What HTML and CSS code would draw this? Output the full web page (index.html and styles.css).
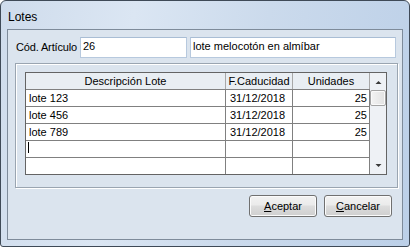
FILE: index.html
```html
<!DOCTYPE html>
<html lang="es">
<head>
<meta charset="utf-8">
<title>Lotes</title>
<link rel="stylesheet" href="styles.css">
</head>
<body>
<div class="window">
  <div class="titlebar"><span class="title">Lotes</span></div>
  <div class="client">
    <div class="field-row">
      <label class="lbl">Cód. Artículo</label>
      <div class="input code">26</div>
      <div class="input desc">lote melocotón en almíbar</div>
    </div>
    <div class="panel">
      <div class="grid">
        <div class="table">
          <div class="row head">
            <div class="cell">Descripción Lote</div>
            <div class="cell">F.Caducidad</div>
            <div class="cell">Unidades</div>
          </div>
          <div class="row">
            <div class="cell">lote 123</div>
            <div class="cell date">31/12/2018</div>
            <div class="cell num">25</div>
          </div>
          <div class="row">
            <div class="cell">lote 456</div>
            <div class="cell date">31/12/2018</div>
            <div class="cell num">25</div>
          </div>
          <div class="row">
            <div class="cell">lote 789</div>
            <div class="cell date">31/12/2018</div>
            <div class="cell num">25</div>
          </div>
          <div class="row">
            <div class="cell"><span class="caret"></span></div>
            <div class="cell date"></div>
            <div class="cell num"></div>
          </div>
          <div class="row">
            <div class="cell"></div>
            <div class="cell date"></div>
            <div class="cell num"></div>
          </div>
        </div>
        <div class="scrollbar">
          <div class="sb-btn"><svg width="7" height="4" viewBox="0 0 7 4"><polygon points="0.5,4 3.5,1 6.5,4" fill="#3a3a3a"/></svg></div>
          <div class="sb-thumb"></div>
          <div class="sb-track"></div>
          <div class="sb-btn"><svg width="7" height="4" viewBox="0 0 7 4"><polygon points="0.5,0 3.5,3 6.5,0" fill="#3a3a3a"/></svg></div>
        </div>
      </div>
    </div>
    <div class="buttons">
      <button class="btn"><u>A</u>ceptar</button>
      <button class="btn"><u>C</u>ancelar</button>
    </div>
  </div>
</div>
</body>
</html>
```
FILE: styles.css
```css
html, body {
  margin: 0;
  padding: 0;
  background: #ffffff;
}

body {
  font-family: "Liberation Sans", Arial, sans-serif;
  font-size: 11px;
  color: #000;
}

.window {
  width: 410px;
  height: 247px;
  box-sizing: border-box;
  border: 1px solid #3f4a57;
  border-radius: 6px 6px 3px 3px;
  background: linear-gradient(100deg, #cfdcec 0%, #dbe6f3 30%, #cbdaec 60%, #bcd0e8 100%);
  padding: 0 6px 6px 6px;
  display: flex;
  flex-direction: column;
}

.titlebar {
  height: 28px;
  box-sizing: border-box;
  padding: 9px 0 0 1px;
  font-size: 12px;
  line-height: 14px;
}

.client {
  flex: none;
  width: 396px;
  height: 211px;
  box-sizing: border-box;
  border: 1px solid #7e8b9a;
  background: #dbe4ee;
  padding: 7px 0 0 7px;
  display: flex;
  flex-direction: column;
}

.field-row {
  display: flex;
  height: 21px;
}

.lbl {
  width: 64px;
  margin-left: 1px;
  padding-top: 4px;
  box-sizing: border-box;
  line-height: 13px;
  letter-spacing: -0.15px;
  white-space: nowrap;
}

.input {
  box-sizing: border-box;
  height: 21px;
  background: #fff;
  border: 1px solid #b7c9de;
  border-top-color: #a9bdd4;
  padding: 2px 2px 0 2px;
  line-height: 13px;
  white-space: nowrap;
  overflow: hidden;
}

.code {
  width: 107px;
}

.desc {
  width: 206px;
  margin-left: 3px;
}

.panel {
  margin-top: 5px;
  width: 383px;
  height: 125px;
  box-sizing: border-box;
  border: 1px solid #9aa5b1;
  box-shadow: inset 1px 1px 0 #ffffff, 1px 1px 0 #ffffff;
  padding: 8px 0 0 9px;
}

.grid {
  width: 362px;
  height: 103px;
  box-sizing: border-box;
  border: 1px solid #646464;
  background: #fff;
  display: flex;
}

.table {
  width: 344px;
  display: flex;
  flex-direction: column;
}

.row {
  display: grid;
  grid-template-columns: 200px 67px 77px;
  height: 17px;
  box-sizing: border-box;
  border-bottom: 1px solid #808080;
}

.row:last-child {
  border-bottom: none;
  height: 16px;
}

.cell {
  border-right: 1px solid #808080;
  box-sizing: border-box;
  padding: 0 3px;
  line-height: 16px;
  white-space: nowrap;
  overflow: hidden;
  position: relative;
}

.head {
  background: #e9eef3;
}

.head .cell {
  text-align: center;
  border-right-color: #a8a8a8;
  padding: 0;
}

.date {
  padding-left: 4px;
}

.num {
  text-align: right;
  padding-right: 2px;
}

.caret {
  position: absolute;
  left: 2px;
  top: 1px;
  width: 1px;
  height: 11px;
  background: #000;
}

.scrollbar {
  width: 16px;
  display: flex;
  flex-direction: column;
  background: #eef1f5;
}

.sb-btn {
  height: 17px;
  display: flex;
  align-items: center;
  justify-content: center;
}

.sb-thumb {
  height: 16px;
  box-sizing: border-box;
  border: 1px solid #a4a4a4;
  border-radius: 2px;
  background: linear-gradient(90deg, #f3f3f3, #e2e2e2);
  box-shadow: inset 0 0 0 1px #fafafa;
}

.sb-track {
  flex: 1;
}

.buttons {
  display: flex;
  justify-content: flex-end;
  gap: 7px;
  margin-top: 7px;
  padding-right: 10px;
}

.btn {
  width: 68px;
  height: 22px;
  box-sizing: border-box;
  border: 1px solid #707070;
  border-radius: 3px;
  background: linear-gradient(#f2f2f2 0%, #ebebeb 45%, #dddddd 50%, #cfcfcf 100%);
  box-shadow: inset 0 0 0 1px #fbfbfb;
  font-family: "Liberation Sans", Arial, sans-serif;
  font-size: 11px;
  line-height: 20px;
  color: #000;
  padding: 0;
  margin: 0;
  text-align: center;
}
```
